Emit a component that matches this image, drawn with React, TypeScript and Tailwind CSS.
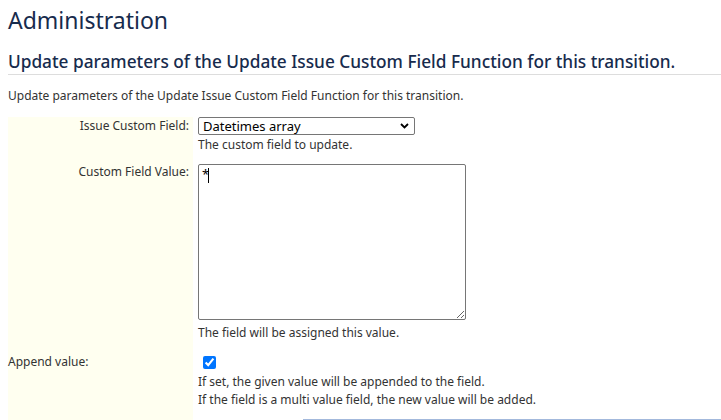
import React from 'react';

const FieldRow: React.FC<{
    label: string;
    alignLeft?: boolean;
    children: React.ReactNode;
}> = ({ label, alignLeft, children }) => (
    <div className="flex">
        <div
            className={`w-[185px] shrink-0 bg-[#fffff0] text-[12px] leading-[18px] text-[#333] ${alignLeft ? 'text-left' : 'text-right pr-1'}`}
        >
            {label}
        </div>
        <div className="pl-[5px] flex-1 min-w-0">{children}</div>
    </div>
);

const App: React.FC = () => {
    return (
        <div className="min-h-[420px] bg-white pl-2 pt-[5px] font-['Noto_Sans','Open_Sans',sans-serif] text-[#333]">
            <h1 className="text-[23px] leading-[30px] text-[#172b4d]">Administration</h1>

            <h2 className="mt-[16px] border-b border-[#dddddd] pb-px text-[17.25px] font-medium leading-[22px] text-[#172b4d]">
                Update parameters of the Update Issue Custom Field Function for this transition.
            </h2>

            <p className="mt-[12px] text-[12px] leading-[18px]">
                Update parameters of the Update Issue Custom Field Function for this transition.
            </p>

            <div className="mt-[12px]">
                <FieldRow label="Issue Custom Field:">
                    <div className="relative w-[217px]">
                        <select
                            defaultValue="dt"
                            className="block h-[18px] w-[217px] appearance-none rounded-[2px] border border-[#767676] bg-white pl-[4px] text-[13px] leading-[16px] text-black"
                        >
                            <option value="dt">Datetimes array</option>
                        </select>
                        <svg
                            className="pointer-events-none absolute right-[6px] top-[6px]"
                            width="9"
                            height="6"
                            viewBox="0 0 9 6"
                        >
                            <polyline points="1,1 4.5,4.5 8,1" fill="none" stroke="#000" strokeWidth="1.8" />
                        </svg>
                    </div>
                    <div className="mt-px pb-[9px] text-[12px] leading-[18px]">The custom field to update.</div>
                </FieldRow>

                <FieldRow label="Custom Field Value:">
                    <div className="relative mt-px w-[268px]">
                        <textarea
                            defaultValue="*"
                            className="block h-[156px] w-[268px] resize rounded-[2px] border border-[#767676] bg-white px-[3px] py-[1px] text-[13px] leading-[16px] text-black"
                        />
                        <span className="pointer-events-none absolute left-[10px] top-[4px] h-[15px] w-px bg-black" />
                    </div>
                    <div className="mt-[4px] pb-[11px] text-[12px] leading-[18px]">The field will be assigned this value.</div>
                </FieldRow>

                <FieldRow label="Append value:" alignLeft>
                    <input type="checkbox" defaultChecked className="ml-[5px] mt-[3px] block h-[13px] w-[13px]" />
                    <div className="mt-[4px] pb-[10px] text-[12px] leading-[18px]">
                        <div>If set, the given value will be appended to the field.</div>
                        <div>If the field is a multi value field, the new value will be added.</div>
                    </div>
                </FieldRow>

                <FieldRow label="">
                    <div className="ml-[105px] h-[10px] border-t border-[#a3b9dc]" />
                </FieldRow>
            </div>
        </div>
    );
};

export default App;
